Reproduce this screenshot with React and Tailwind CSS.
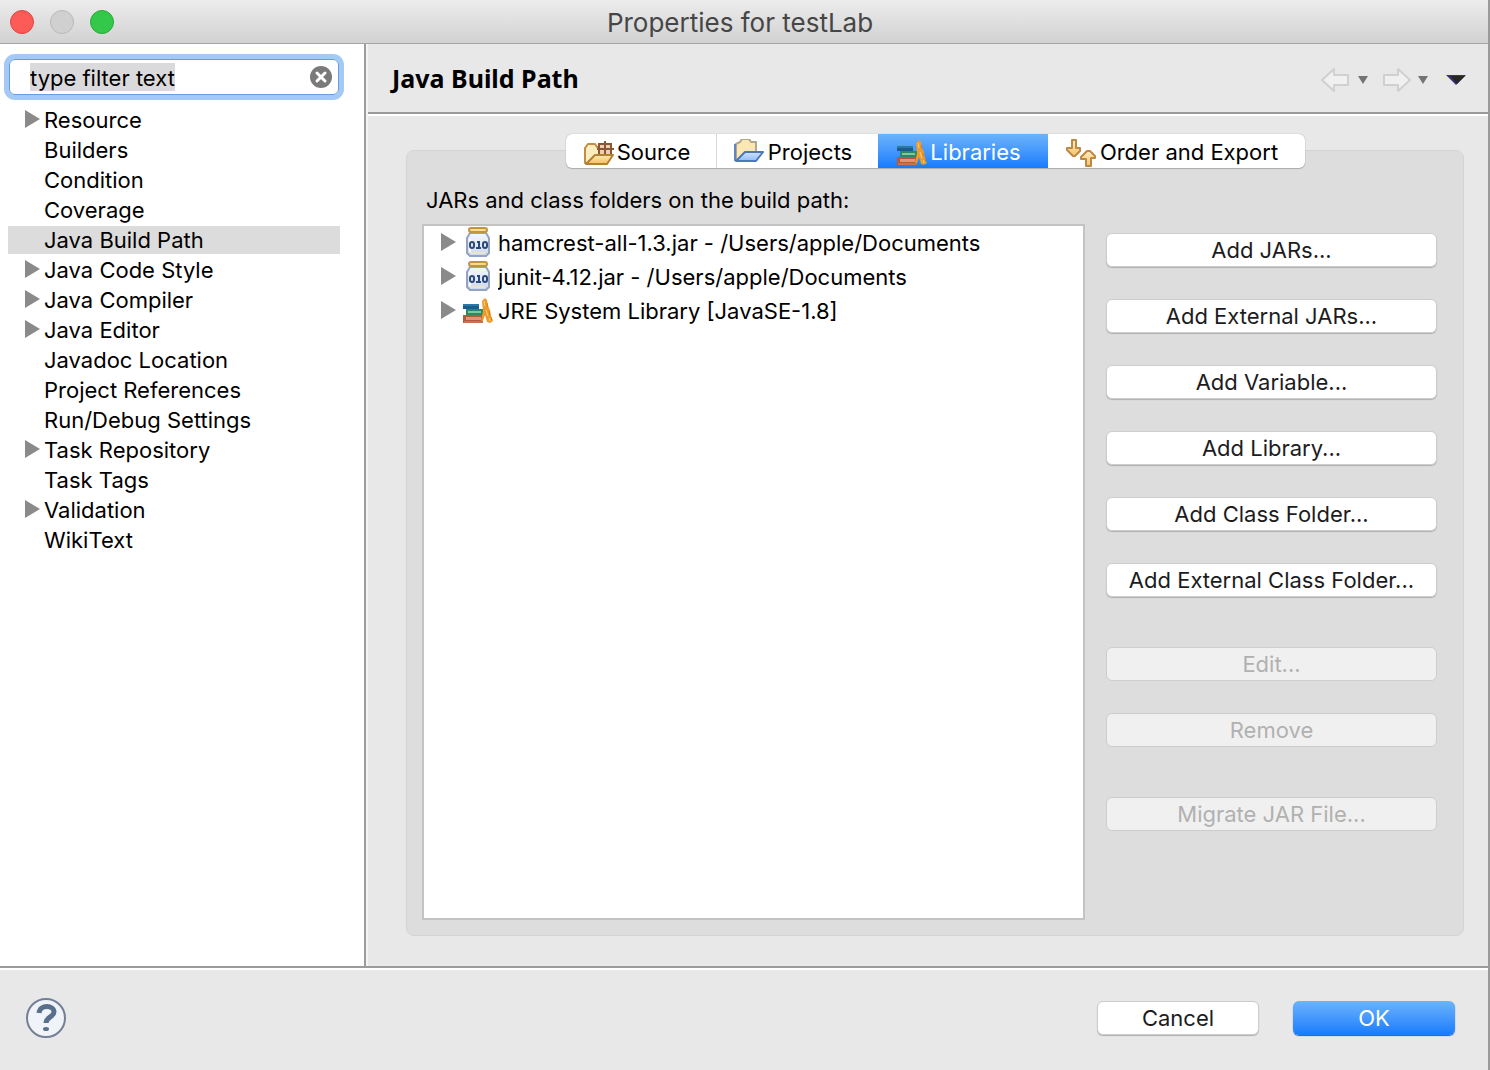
import { useState } from 'react';

const categories = [
  { name: 'Resource', expandable: true },
  { name: 'Builders' },
  { name: 'Condition' },
  { name: 'Coverage' },
  { name: 'Java Build Path' },
  { name: 'Java Code Style', expandable: true },
  { name: 'Java Compiler', expandable: true },
  { name: 'Java Editor', expandable: true },
  { name: 'Javadoc Location' },
  { name: 'Project References' },
  { name: 'Run/Debug Settings' },
  { name: 'Task Repository', expandable: true },
  { name: 'Task Tags' },
  { name: 'Validation', expandable: true },
  { name: 'WikiText' },
];

const tabs = [
  { name: 'Source', icon: SourceIcon, className: 'w-[151px] rounded-l-md border-r border-[#d8d8d8] pr-2' },
  { name: 'Projects', icon: ProjectsIcon, className: 'w-[161px] pr-2' },
  { name: 'Libraries', icon: BooksIcon, className: 'w-[170px] pr-2' },
  { name: 'Order and Export', icon: OrderIcon, className: 'w-[257px] rounded-r-md pr-2' },
];

const entries = [
  { name: 'hamcrest-all-1.3.jar - /Users/apple/Documents', icon: JarIcon },
  { name: 'junit-4.12.jar - /Users/apple/Documents', icon: JarIcon },
  { name: 'JRE System Library [JavaSE-1.8]', icon: BooksIcon },
];

const addActions = [
  'Add JARs...',
  'Add External JARs...',
  'Add Variable...',
  'Add Library...',
  'Add Class Folder...',
  'Add External Class Folder...',
];

function Triangle() {
  return (
    <svg viewBox="0 0 16 20" className="h-5 w-4 shrink-0" aria-hidden="true">
      <path d="M1 0 16 9 1 18Z" fill="#8a8a8a" />
    </svg>
  );
}

function SourceIcon() {
  return (
    <svg viewBox="0 0 32 28" className="h-7 w-8 shrink-0" aria-hidden="true">
      <defs>
        <linearGradient id="sourceFlap" x1="0" y1="0" x2="0" y2="1">
          <stop offset="0" stopColor="#fdebb5" />
          <stop offset="1" stopColor="#f3bd62" />
        </linearGradient>
      </defs>
      <path d="M2 24V9l3-4h7l2 3h9v16Z" fill="#fcecc0" stroke="#c08d43" strokeWidth="2" strokeLinejoin="round" />
      <path d="M15 5h13v11H15z" fill="#ecd0b4" />
      <path d="M16 5h12v11H16zM22 2v14M14 10h17" fill="none" stroke="#8a5636" strokeWidth="2" />
      <path d="m3 25 9-9h18l-6 9Z" fill="url(#sourceFlap)" stroke="#b5812f" strokeWidth="2" strokeLinejoin="round" />
    </svg>
  );
}

function ProjectsIcon() {
  return (
    <svg viewBox="0 0 32 28" className="h-7 w-8 shrink-0" aria-hidden="true">
      <defs>
        <linearGradient id="projectFlap" x1="0" y1="0" x2="0" y2="1">
          <stop offset="0" stopColor="#cfe3fc" />
          <stop offset="1" stopColor="#8fbdf4" />
        </linearGradient>
      </defs>
      <path d="M2 21V5l4-2 2-3h7l2 3h5v17Z" fill="#fbe7b4" stroke="#b3a68a" strokeWidth="2" strokeLinejoin="round" />
      <path d="M1 5v17" stroke="#5f86c0" strokeWidth="2" />
      <path d="m2 22 9-9h18l-7 9Z" fill="url(#projectFlap)" stroke="#4c78bb" strokeWidth="2" strokeLinejoin="round" />
    </svg>
  );
}

function BooksIcon() {
  return (
    <svg viewBox="0 0 32 28" className="h-7 w-8 shrink-0" aria-hidden="true">
      <path d="M1 7h16v5H1z" fill="#2a78a6" />
      <path d="M1 9h16v3H1z" fill="#1c5c88" />
      <path d="M4 12h17v6H4z" fill="#2b8a66" />
      <path d="M6 14h13v2H6z" fill="#7fc79c" />
      <path d="M1 18h20v8H1z" fill="#b05c3c" />
      <path d="M4 20h15v3H4z" fill="#dd9873" />
      <path d="M2 24h19v2H2z" fill="#c47350" />
      <path d="m20 4 3-3 2 2 1 6 2 4 1 6 2 5-3 2-3-1-2-7-2 6h-2l2-10Z" fill="#ee9a2c" />
      <path d="m22 4 1 5M24 13l2 6M27 21l1 3" stroke="#ffd374" strokeWidth="1" />
      <path d="m25 6 1 4M27 14l1 4M29 20l1 3" stroke="#d67c17" strokeWidth="1" />
    </svg>
  );
}

function OrderIcon() {
  return (
    <svg viewBox="0 0 32 28" className="h-7 w-8 shrink-0" aria-hidden="true">
      <defs>
        <linearGradient id="orderArrow" x1="0" y1="0" x2="0" y2="1">
          <stop offset="0" stopColor="#fdeec0" />
          <stop offset="1" stopColor="#f6c368" />
        </linearGradient>
      </defs>
      <path d="M6 1h4v8h4v3l-5 5H7l-6-6V9h5Z" fill="url(#orderArrow)" stroke="#be8946" strokeWidth="2" strokeLinejoin="round" />
      <path d="M20 27h5v-8h4v-2l-5-5h-3l-6 6v2h5Z" fill="url(#orderArrow)" stroke="#be8946" strokeWidth="2" strokeLinejoin="round" />
    </svg>
  );
}

function JarIcon() {
  return (
    <svg viewBox="0 0 32 32" className="h-8 w-8 shrink-0" aria-hidden="true">
      <defs>
        <linearGradient id="jarGlass" x1="0" y1="0" x2="0" y2="1">
          <stop offset="0" stopColor="#f4f8fd" />
          <stop offset="1" stopColor="#cbd8ec" />
        </linearGradient>
      </defs>
      <path d="M8 6h16l3 5v15l-3 3H8l-3-3V11Z" fill="url(#jarGlass)" stroke="#94a4c0" strokeWidth="2" strokeLinejoin="round" />
      <path d="M8 12v13" stroke="#fff" strokeWidth="2" />
      <path d="M8 26h15" stroke="#e9e4cf" strokeWidth="2" />
      <rect x="7" y="1" width="18" height="4" rx="2" fill="#f8dc8b" stroke="#c29440" strokeWidth="2" />
      <g fill="none" stroke="#2c497c" strokeWidth="2">
        <rect x="8" y="15" width="4" height="6" rx="2" />
        <path d="M15 15h2v6M14 21h5" />
        <rect x="21" y="15" width="4" height="6" rx="2" />
      </g>
    </svg>
  );
}

function PushButton({ children, className = '', ...props }) {
  return (
    <button
      type="button"
      className={`h-[34px] rounded-md border border-[#cdcdcd] bg-white text-[22px] leading-8 text-[#1c1c1e] shadow-[0_1px_1px_#b0b0b0] disabled:bg-[#f0f0f0] disabled:text-[#b1b1b1] disabled:shadow-none ${className}`}
      {...props}
    >
      {children}
    </button>
  );
}

function TitleBar() {
  return (
    <header className="grid h-11 shrink-0 grid-cols-[1fr_auto_1fr] items-center border-b border-[#a5a5a5] bg-linear-to-b from-[#ececec] to-[#d2d2d2] px-[10px]">
      <div className="flex gap-4">
        <button type="button" aria-label="Close" className="size-6 rounded-full border border-[#e0443e] bg-[#fc5b57]" />
        <button type="button" aria-label="Minimize" className="size-6 rounded-full border border-[#b9b9b9] bg-[#d0d0d0]" />
        <button type="button" aria-label="Zoom" className="size-6 rounded-full border border-[#27aa35] bg-[#34c84a]" />
      </div>
      <h1 className="pt-0.5 pr-2 text-[26px] leading-8 text-[#464646]">Properties for testLab</h1>
    </header>
  );
}

function Sidebar({ selected, onSelect }) {
  const [filter, setFilter] = useState('type filter text');

  return (
    <aside className="w-[366px] shrink-0 border-r-2 border-[#9d9d9d] bg-white pt-[15px]">
      <div className="mr-[25px] ml-[9px] flex h-9 items-center rounded-md border border-[#6a9bd8] pr-[6px] pl-5 ring-5 ring-[#a3c9f5]">
        <input
          aria-label="Filter"
          value={filter}
          onChange={(event) => setFilter(event.target.value)}
          className="field-sizing-content h-7 min-w-4 max-w-[260px] bg-[#dadadc] pt-0.5 text-[22px] outline-none"
        />
        <button type="button" aria-label="Clear filter" onClick={() => setFilter('')} className="ml-auto">
          <svg viewBox="0 0 22 22" className="size-[22px]" aria-hidden="true">
            <circle cx="11" cy="11" r="11" fill="#7a7a7a" />
            <path d="m7 7 8 8M15 7l-8 8" stroke="#fff" strokeWidth="3" strokeLinecap="round" />
          </svg>
        </button>
      </div>
      <ul className="mt-[11px] mr-6 ml-2 flex flex-col gap-0.5">
        {categories.map((category) => (
          <li key={category.name}>
            <button
              type="button"
              onClick={() => onSelect(category.name)}
              className={`flex h-7 w-full items-center gap-1 pl-4 text-left text-[22px] leading-7 ${category.name === selected ? 'bg-[#dcdcdc]' : ''}`}
            >
              <span className="w-4">{category.expandable && <Triangle />}</span>
              {category.name}
            </button>
          </li>
        ))}
      </ul>
    </aside>
  );
}

function HistoryControls() {
  return (
    <div className="flex items-center pt-1">
      <button type="button" aria-label="Back" disabled>
        <svg viewBox="0 0 32 26" className="h-[26px] w-8" aria-hidden="true">
          <path d="M2 13 14 2v6h14v10H14v6Z" fill="#f0f0f0" stroke="#d0d0d0" strokeWidth="2" strokeLinejoin="round" />
        </svg>
      </button>
      <button type="button" aria-label="Back history" className="ml-[6px]">
        <svg viewBox="0 0 10 8" className="h-2 w-[10px]" aria-hidden="true">
          <path d="M0 0h10L5 8Z" fill="#747474" />
        </svg>
      </button>
      <button type="button" aria-label="Forward" disabled className="ml-3">
        <svg viewBox="0 0 32 26" className="h-[26px] w-8" aria-hidden="true">
          <path d="M30 13 18 2v6H4v10h14v6Z" fill="#f0f0f0" stroke="#d0d0d0" strokeWidth="2" strokeLinejoin="round" />
        </svg>
      </button>
      <button type="button" aria-label="Forward history" className="ml-[6px]">
        <svg viewBox="0 0 10 8" className="h-2 w-[10px]" aria-hidden="true">
          <path d="M0 0h10L5 8Z" fill="#747474" />
        </svg>
      </button>
      <button type="button" aria-label="View menu" className="ml-[18px]">
        <svg viewBox="0 0 20 12" className="h-3 w-5" aria-hidden="true">
          <path d="M0 1h20l-10 10Z" fill="#3a2f7c" />
          <path d="M4 2h15l-8 8Z" fill="#25252b" />
        </svg>
      </button>
    </div>
  );
}

function BuildPathPanel() {
  const [activeTab, setActiveTab] = useState('Libraries');

  return (
    <div className="flex flex-1 flex-col pt-[18px] pr-6 pb-[30px] pl-[38px]">
      <div role="tablist" className="relative z-10 -mb-[18px] flex h-[34px] self-center rounded-md bg-white shadow-[0_0_1px_#8c8c8c,0_1px_1px_#b0b0b0]">
        {tabs.map(({ name, icon: Icon, className }) => (
          <button
            key={name}
            type="button"
            role="tab"
            aria-selected={name === activeTab}
            onClick={() => setActiveTab(name)}
            className={`flex items-center justify-center text-[22px] ${className} ${name === activeTab ? 'bg-linear-to-b from-[#6bb3fa] to-[#147bfe] text-white' : ''}`}
          >
            <span className="pt-1 pr-0.5"><Icon /></span>
            <span className="pt-0.5">{name}</span>
          </button>
        ))}
      </div>

      <section className="flex flex-1 flex-col rounded-lg border border-[#d4d4d4] bg-[#dddddd] pt-[33px] pr-[26px] pb-[15px] pl-[15px]">
        <h3 className="pl-1 text-[22px] leading-8">JARs and class folders on the build path:</h3>
        <div className="mt-2 flex flex-1 gap-[21px]">
          <ul className="min-w-0 flex-1 border-2 border-[#c3c3c3] bg-white">
            {entries.map(({ name, icon: Icon }) => (
              <li key={name} className="flex h-[34px] items-center pl-4 text-[22px] leading-8">
                <Triangle />
                <span className="ml-[6px]"><Icon /></span>
                <span className="ml-1 truncate">{name}</span>
              </li>
            ))}
          </ul>
          <div className="flex w-[331px] shrink-0 flex-col pt-[9px]">
            <div className="flex flex-col gap-8">
              {addActions.map((action) => (
                <PushButton key={action}>{action}</PushButton>
              ))}
            </div>
            <div className="mt-[50px] flex flex-col gap-8">
              <PushButton disabled>Edit...</PushButton>
              <PushButton disabled>Remove</PushButton>
            </div>
            <PushButton disabled className="mt-[50px]">Migrate JAR File...</PushButton>
          </div>
        </div>
      </section>
    </div>
  );
}

function App() {
  const [selected, setSelected] = useState('Java Build Path');

  return (
    <div className="flex min-h-screen flex-col border-r-2 border-[#9a9a9a] bg-[#e8e8e8] font-['Inter','Liberation_Sans',sans-serif] text-black">
      <TitleBar />

      <div className="flex flex-1">
        <Sidebar selected={selected} onSelect={setSelected} />
        <main className="flex min-w-0 flex-1 flex-col border-l-2 border-[#f3f3f3]">
          <div className="flex h-[70px] items-center justify-between border-b-2 border-[#9b9b9b] pr-[22px] pl-6">
            <h2 className="pt-0.5 font-['Noto_Sans','Open_Sans',sans-serif] text-[25px] font-bold">{selected}</h2>
            <HistoryControls />
          </div>
          <div className="h-0.5 bg-white" />
          <BuildPathPanel />
        </main>
      </div>

      <footer className="border-t-2 border-[#9b9b9b]">
        <div className="flex h-[102px] items-center justify-between border-t-2 border-white pr-[33px] pb-1 pl-[25px]">
          <button type="button" aria-label="Help">
            <svg viewBox="0 0 42 42" className="size-[42px]" aria-hidden="true">
              <circle cx="21" cy="21" r="19" fill="#f0f3f8" stroke="#747f96" strokeWidth="2" />
              <path d="M14 16c1-9 15-8 15-1 0 5-8 5-8 11" fill="none" stroke="#596f8c" strokeWidth="5" />
              <ellipse cx="21" cy="32" rx="3" ry="2" fill="#596f8c" />
            </svg>
          </button>
          <div className="flex gap-[34px]">
            <PushButton className="w-[162px]">Cancel</PushButton>
            <button type="button" className="h-[34px] w-[162px] rounded-md bg-linear-to-b from-[#6bb3fa] to-[#147bfe] text-[22px] leading-[34px] text-white shadow-[0_1px_1px_#1560d8]">
              OK
            </button>
          </div>
        </div>
      </footer>
    </div>
  );
}

export default App;
